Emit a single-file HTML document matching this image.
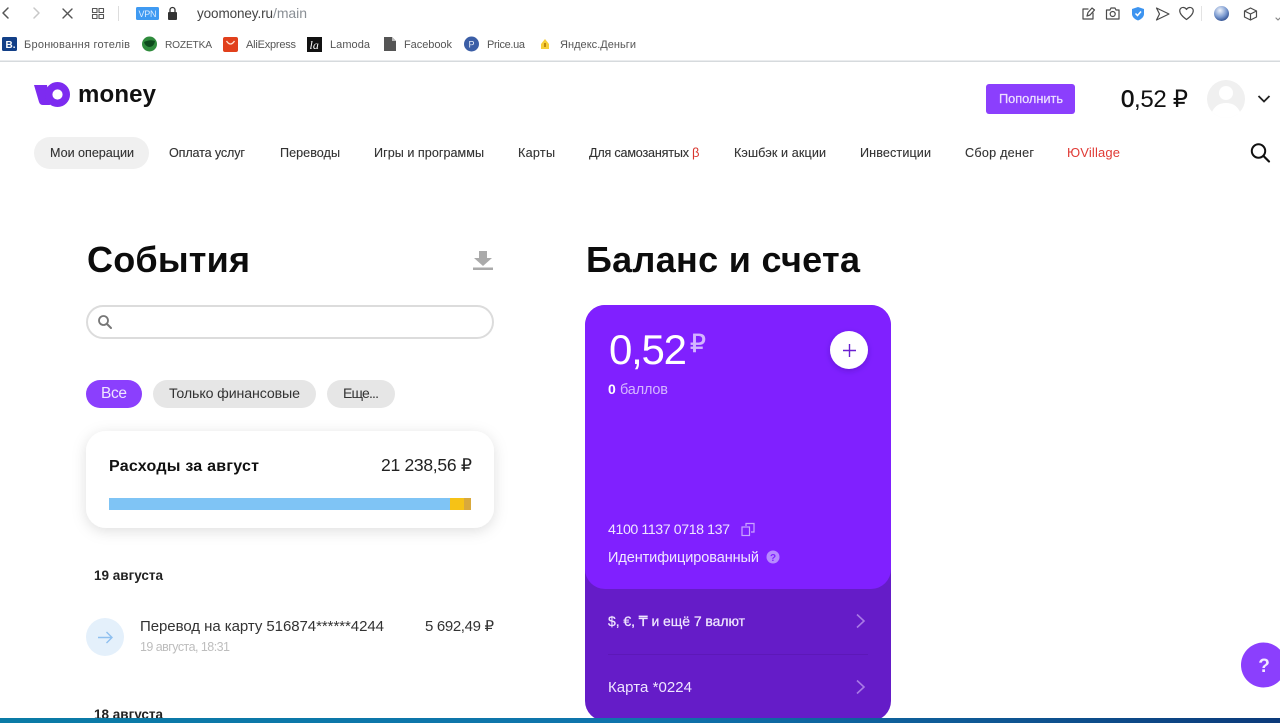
<!DOCTYPE html>
<html lang="ru">
<head>
<meta charset="utf-8">
<title>ЮMoney</title>
<style>
html,body{margin:0;padding:0;background:#fff;width:1280px;height:723px;overflow:hidden}
svg{display:block;position:absolute;left:0;top:0;filter:blur(.3px)}
text{font-family:"Liberation Sans","Noto Sans CJK SC",sans-serif;white-space:pre}
.nav{font-size:12.6px;fill:#333;stroke:#333;stroke-width:.12px}
.bm{font-size:11px;fill:#555}
.m{stroke-width:.25px}
</style>
</head>
<body>
<svg width="1280" height="723" viewBox="0 0 1280 723" xmlns="http://www.w3.org/2000/svg">
<defs>
<filter id="sh" x="-20%" y="-30%" width="140%" height="170%"><feDropShadow dx="0" dy="3" stdDeviation="7" flood-color="#000" flood-opacity=".13"/></filter>
<filter id="sh2" x="-40%" y="-40%" width="180%" height="180%"><feDropShadow dx="0" dy="2" stdDeviation="3" flood-color="#300080" flood-opacity=".3"/></filter>
<linearGradient id="tb" x1="0" x2="1" y1="0" y2="0"><stop offset="0" stop-color="#0a7ba6"/><stop offset=".5" stop-color="#0f74ac"/><stop offset=".75" stop-color="#0e5a96"/><stop offset="1" stop-color="#0c3a7a"/></linearGradient>
<radialGradient id="gl" cx=".4" cy=".3" r=".8"><stop offset="0" stop-color="#f0f4fb"/><stop offset=".55" stop-color="#7b9ad0"/><stop offset="1" stop-color="#1d3d80"/></radialGradient>
</defs>

<!-- browser toolbar -->
<g fill="none" stroke-linecap="round" stroke-linejoin="round">
<path d="M8 8 L3 13 L8 18" stroke="#555" stroke-width="1.500"/>
<path d="M34 8 L39 13 L34 18" stroke="#c8c8c8" stroke-width="1.500"/>
<path d="M63 9 L72 18 M72 9 L63 18" stroke="#555" stroke-width="1.400"/>
<g stroke="#555" stroke-width="1.100"><rect x="92.500" y="8.500" width="4.500" height="4"/><rect x="99" y="8.500" width="4.500" height="4"/><rect x="92.500" y="14.500" width="4.500" height="4"/><rect x="99" y="14.500" width="4.500" height="4"/></g>
</g>
<rect x="118" y="6" width="1" height="15" fill="#ddd"/>
<rect x="136" y="7" width="23" height="13" rx="1.500" fill="#3f9af2"/>
<text x="147.500" y="16.800" font-size="9" fill="#dcecff" text-anchor="middle" textLength="18">VPN</text>
<rect x="168" y="12" width="9" height="8" rx="1" fill="#333"/>
<path d="M170 12 V10 a2.500 2.500 0 0 1 5 0 V12" fill="none" stroke="#333" stroke-width="1.300"/>
<text x="197" y="18" font-size="13.500" fill="#444" textLength="76">yoomoney.ru</text>
<text x="273" y="18" font-size="14" fill="#8a8f95" textLength="34">/main</text>

<g fill="none" stroke="#4a4a4a" stroke-width="1.200" stroke-linejoin="round" stroke-linecap="round">
<path d="M1093 13 V19 H1083 V9 H1088"/><path d="M1087 16 L1088 12.500 L1092 8 L1094.500 10 L1090 15 Z"/>
<path d="M1106.500 10 H1110 L1111 8 H1115 L1116 10 H1119 V19 H1106.500 Z"/><circle cx="1112.700" cy="14" r="2.500"/>
<path d="M1156.500 8 L1169 14 L1156.500 20 L1159.500 14 Z"/>
<path d="M1186.500 19.500 C1176 12 1180 7 1183.500 7.500 C1185 7.700 1186 8.500 1186.500 9.500 C1187 8.500 1188 7.700 1189.500 7.500 C1193 7 1197 12 1186.500 19.500 Z"/>
<path d="M1250.500 8 L1256.500 11 V17 L1250.500 20 L1244.500 17 V11 Z M1244.500 11 L1250.500 14 L1256.500 11 M1250.500 14 V20"/>
<path d="M1276 18 L1278 20 L1280 18" stroke="#888"/>
</g>
<path d="M1138 7 L1144 9 V14 C1144 17 1141 19.500 1138 20.500 C1135 19.500 1132 17 1132 14 V9 Z" fill="#3d94f0"/>
<path d="M1135.500 13.500 L1137.500 15.500 L1141 11.500" fill="none" stroke="#fff" stroke-width="1.500"/>
<rect x="1201" y="6" width="1" height="15" fill="#e3e3e3"/>
<circle cx="1221.500" cy="13.500" r="7.500" fill="url(#gl)"/>

<!-- bookmarks -->
<rect x="2" y="37" width="15" height="14" rx="1.500" fill="#123f87"/>
<text x="5.500" y="48" font-size="10" font-weight="bold" fill="#fff">B.</text>
<text class="bm" x="24" y="48" textLength="106">Бронювання готелів</text>
<circle cx="149.500" cy="44" r="7.500" fill="#2f8b3c"/>
<path d="M144 42 Q150 39 155 41 Q154 47 149 47 Q145 46 144 42Z" fill="#0d4a1c"/>
<text class="bm" style="font-size:10.200px" x="165" y="48" textLength="47">ROZETKA</text>
<rect x="223" y="37" width="15" height="15" rx="2" fill="#e1401c"/>
<path d="M226.500 41 Q230.500 47 234.500 41" fill="none" stroke="#ffe1d0" stroke-width="1.300"/>
<text class="bm" x="246" y="48" textLength="50">AliExpress</text>
<rect x="307" y="37" width="15" height="15" fill="#111"/>
<text x="309.500" y="49" font-size="12" font-style="italic" fill="#fff" style="font-family:'Liberation Serif',serif">la</text>
<text class="bm" x="330" y="48" textLength="40">Lamoda</text>
<path d="M384 37 H392 L396 41 V51 H384 Z" fill="#555"/>
<path d="M392 37 V41 H396" fill="#bbb"/>
<text class="bm" x="404" y="48" textLength="48">Facebook</text>
<circle cx="471.500" cy="44" r="7.500" fill="#3b5ea6"/>
<text x="471.500" y="47.500" font-size="9" fill="#e6ecf8" text-anchor="middle">P</text>
<text class="bm" x="487" y="48" textLength="38">Price.ua</text>
<path d="M545 39 L549 44 V49 H541 V44 Z" fill="#f6cf3a"/>
<rect x="544" y="43" width="2" height="4" fill="#c08a10"/>
<text class="bm" x="560" y="48" textLength="76">Яндекс.Деньги</text>
<rect x="0" y="60.500" width="1280" height="1.500" fill="#d6dadd"/>

<!-- logo -->
<path d="M34 85 H47 L50 105 H43 Q40 105 39 102 Z" fill="#7d2bf0"/>
<circle cx="57.500" cy="94.500" r="8.800" fill="none" stroke="#7d2bf0" stroke-width="7.400"/>
<text x="78" y="102" font-size="24" font-weight="bold" fill="#111" textLength="78">money</text>

<!-- top right -->
<rect x="986" y="84" width="89" height="30" rx="3" fill="#8b3ffd"/>
<text class="m" x="999" y="103" font-size="12.800" fill="#ecdfff" stroke="#ecdfff" textLength="64">Пополнить</text>
<text x="1121" y="107" font-size="24" fill="#111" textLength="67"><tspan stroke="#111" stroke-width=".6">0</tspan>,52 ₽</text>
<circle cx="1226" cy="99" r="19" fill="#f0f0f0"/>
<circle cx="1226" cy="93" r="7" fill="#fff"/>
<path d="M1212 112 Q1216 103 1226 103 Q1236 103 1240 112 Q1234 118 1226 118 Q1218 118 1212 112Z" fill="#fff"/>
<path d="M1258.500 96 L1264 101.500 L1269.500 96" fill="none" stroke="#222" stroke-width="1.800"/>

<!-- nav -->
<rect x="34" y="137" width="115" height="32" rx="16" fill="#f0f0f0"/>
<g>
<text class="nav" x="50" y="157" textLength="84">Мои операции</text>
<text class="nav" x="169" y="157" textLength="76">Оплата услуг</text>
<text class="nav" x="280" y="157" textLength="60">Переводы</text>
<text class="nav" x="374" y="157" textLength="110">Игры и программы</text>
<text class="nav" x="518" y="157" textLength="37">Карты</text>
<text class="nav" x="589" y="157" textLength="100">Для самозанятых</text>
<text x="692" y="157" font-size="13" fill="#d8342c" textLength="8">β</text>
<text class="nav" x="734" y="157" textLength="92">Кэшбэк и акции</text>
<text class="nav" x="860" y="157" textLength="71">Инвестиции</text>
<text class="nav" x="965" y="157" textLength="69">Сбор денег</text>
<text x="1067" y="157" font-size="13" fill="#e03a35" textLength="53">ЮVillage</text>
</g>
<circle cx="1258.500" cy="151" r="6.700" fill="none" stroke="#111" stroke-width="2"/>
<path d="M1263.500 156 L1269 161.500" stroke="#111" stroke-width="2.200" stroke-linecap="round"/>

<!-- events -->
<text x="87" y="272" font-size="36" font-weight="bold" fill="#0c0c0c" textLength="163">События</text>
<path d="M479 251 H487 V258 H492 L483 266 L474 258 H479 Z" fill="#aaa"/>
<rect x="473" y="267.500" width="20" height="2.500" fill="#aaa"/>
<rect x="87" y="306" width="406" height="32" rx="16" fill="#fff" stroke="#dcdcdc" stroke-width="2"/>
<circle cx="103.500" cy="320.500" r="4.500" fill="none" stroke="#777" stroke-width="1.800"/>
<path d="M107 324 L111 328" stroke="#777" stroke-width="2" stroke-linecap="round"/>

<rect x="86" y="380" width="56" height="28" rx="14" fill="#8b3ffd"/>
<text x="101" y="398" font-size="15.500" fill="#efe5ff" textLength="26">Все</text>
<rect x="153" y="380" width="163" height="28" rx="14" fill="#e6e6e6"/>
<text x="169" y="398" font-size="14.200" fill="#333" textLength="131">Только финансовые</text>
<rect x="327" y="380" width="68" height="28" rx="14" fill="#e6e6e6"/>
<text x="343" y="398" font-size="14" fill="#333" textLength="36">Еще...</text>

<!-- expenses -->
<rect x="86" y="431" width="408" height="97" rx="20" fill="#fff" filter="url(#sh)"/>
<text x="109" y="471" font-size="16" font-weight="bold" fill="#111" textLength="150">Расходы за август</text>
<text x="381" y="471" font-size="17.500" fill="#222" textLength="91">21 238,56 ₽</text>
<rect x="109" y="498" width="341" height="12" fill="#7fc4f5"/>
<rect x="450" y="498" width="14" height="12" fill="#f6c216"/>
<rect x="464" y="498" width="7" height="12" fill="#d9a93c"/>

<text x="94" y="580" font-size="13.500" font-weight="bold" fill="#222" textLength="69">19 августа</text>
<circle cx="105" cy="637" r="19" fill="#e4f0fb"/>
<path d="M98 637.500 H112 M106.500 632 L112 637.500 L106.500 643" fill="none" stroke="#8fc0ef" stroke-width="1.400"/>
<text x="140" y="631" font-size="15" fill="#333" textLength="244">Перевод на карту 516874******4244</text>
<text x="425" y="631" font-size="15" fill="#333" textLength="69">5 692,49 ₽</text>
<text x="140" y="651" font-size="12.500" fill="#bdbdbd" textLength="90">19 августа, 18:31</text>
<text x="94" y="719" font-size="13.500" font-weight="bold" fill="#222" textLength="69">18 августа</text>

<!-- balance -->
<text x="586" y="272" font-size="36" font-weight="bold" fill="#0c0c0c" textLength="274">Баланс и счета</text>
<rect x="585" y="305" width="306" height="416" rx="20" fill="#651cc8"/>
<path d="M605 305 H871 A20 20 0 0 1 891 325 V569 A20 20 0 0 1 871 589 H605 A20 20 0 0 1 585 569 V325 A20 20 0 0 1 605 305Z" fill="#8020ff"/>
<text x="609" y="364" font-size="42" fill="#fff" textLength="78">0,52</text>
<text x="690" y="352" font-size="25" fill="#d3b5ff" stroke="#d3b5ff" stroke-width=".4">₽</text>
<circle cx="849" cy="350" r="19" fill="#fff" filter="url(#sh2)"/>
<path d="M843 350.500 H856 M849.500 344 V357" stroke="#6a20d0" stroke-width="1.400"/>
<text x="608" y="394" font-size="14" font-weight="bold" fill="#fff">0</text>
<text x="620" y="394" font-size="14.500" fill="#d4b6ff" textLength="48">баллов</text>
<text x="608" y="534" font-size="14.200" fill="#eee6ff" textLength="122">4100 1137 0718 137</text>
<g fill="none" stroke="#c9a4ff" stroke-width="1.200"><rect x="742" y="527" width="7.500" height="8.500"/><path d="M746 526 V523.500 H754 V532 H751"/></g>
<text x="608" y="562" font-size="14.500" fill="#f0e8ff" textLength="151">Идентифицированный</text>
<circle cx="773" cy="557" r="6.500" fill="#b78bff"/>
<text x="773" y="561" font-size="10" font-weight="bold" fill="#8020ff" text-anchor="middle">?</text>
<text class="m" x="608" y="626" font-size="14" fill="#efe6ff" stroke="#efe6ff" textLength="137">$, €, ₸ и ещё 7 валют</text>
<path d="M857 614.500 L864 621 L857 627.500" fill="none" stroke="#a97ae6" stroke-width="1.600"/>
<rect x="608" y="654" width="260" height="1" fill="#5d18b8"/>
<text x="608" y="692" font-size="15" fill="#efe6ff" textLength="84">Карта *0224</text>
<path d="M857 680.500 L864 687 L857 693.500" fill="none" stroke="#a97ae6" stroke-width="1.600"/>

<!-- help -->
<circle cx="1263.500" cy="665" r="22.500" fill="#8b3ffd"/>
<text x="1264" y="672" font-size="19" font-weight="bold" fill="#f3e9ff" text-anchor="middle">?</text>

<!-- taskbar -->
<rect x="0" y="718" width="1280" height="5" fill="url(#tb)"/>
</svg>
</body>
</html>
